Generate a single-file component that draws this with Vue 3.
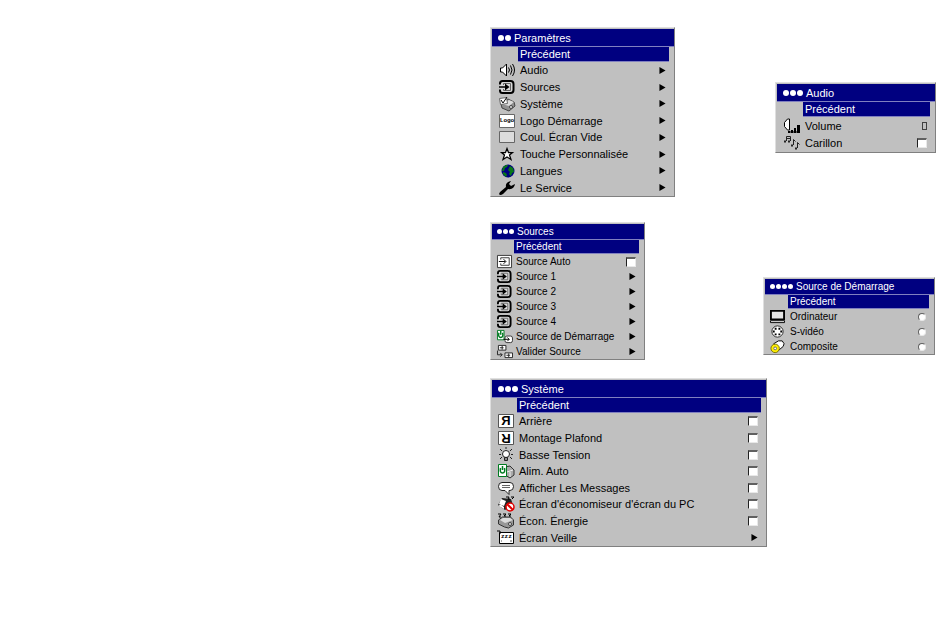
<script setup>
import { reactive } from 'vue';

// type: 'menu' (sous-menu), 'check', 'radio' ou 'level'
const menus = reactive([
  {
    id: 'parametres',
    title: 'Paramètres',
    depth: 2,
    items: [
      { label: 'Audio', icon: 'audio', type: 'menu' },
      { label: 'Sources', icon: 'source', type: 'menu' },
      { label: 'Système', icon: 'system', type: 'menu' },
      { label: 'Logo Démarrage', icon: 'logo', type: 'menu' },
      { label: 'Coul. Écran Vide', icon: 'blank', type: 'menu' },
      { label: 'Touche Personnalisée', icon: 'star', type: 'menu' },
      { label: 'Langues', icon: 'globe', type: 'menu' },
      { label: 'Le Service', icon: 'wrench', type: 'menu' }
    ]
  },
  {
    id: 'audio',
    title: 'Audio',
    depth: 3,
    items: [
      { label: 'Volume', icon: 'volume', type: 'level' },
      { label: 'Carillon', icon: 'chime', type: 'check', value: false }
    ]
  },
  {
    id: 'sources',
    title: 'Sources',
    depth: 3,
    items: [
      { label: 'Source Auto', icon: 'autosource', type: 'check', value: false },
      { label: 'Source 1', icon: 'source', type: 'menu' },
      { label: 'Source 2', icon: 'source', type: 'menu' },
      { label: 'Source 3', icon: 'source', type: 'menu' },
      { label: 'Source 4', icon: 'source', type: 'menu' },
      { label: 'Source de Démarrage', icon: 'startsource', type: 'menu' },
      { label: 'Valider Source', icon: 'enable', type: 'menu' }
    ]
  },
  {
    id: 'demarrage',
    title: 'Source de Démarrage',
    depth: 4,
    items: [
      { label: 'Ordinateur', icon: 'computer', type: 'radio' },
      { label: 'S-vidéo', icon: 'svideo', type: 'radio' },
      { label: 'Composite', icon: 'composite', type: 'radio' }
    ]
  },
  {
    id: 'systeme',
    title: 'Système',
    depth: 3,
    items: [
      { label: 'Arrière', icon: 'rear', type: 'check', value: false },
      { label: 'Montage Plafond', icon: 'ceiling', type: 'check', value: false },
      { label: 'Basse Tension', icon: 'bulb', type: 'check', value: false },
      { label: 'Alim. Auto', icon: 'power', type: 'check', value: false },
      { label: 'Afficher Les Messages', icon: 'message', type: 'check', value: false },
      { label: "Écran d'économiseur d'écran du PC", icon: 'saver', type: 'check', value: false },
      { label: 'Écon. Énergie', icon: 'energy', type: 'check', value: false },
      { label: 'Écran Veille', icon: 'sleep', type: 'menu' }
    ]
  }
]);

// regroupement des menus par ligne
const rows = [
  [menus[0], menus[1]],
  [menus[2], menus[3]],
  [menus[4]]
];
</script>

<template>
  <main class="page">
    <div v-for="(row, index) in rows" :key="index" class="menu-row">
      <section v-for="menu in row" :key="menu.id" class="menu" :class="menu.id">
        <h2 class="menu-title">
          <span class="dots"><i v-for="n in menu.depth" :key="n" class="dot"></i></span>
          {{ menu.title }}
        </h2>
        <div class="items">
          <button type="button" class="item back">
            <span class="label">Précédent</span>
          </button>
          <component
            :is="item.type === 'menu' ? 'button' : 'label'"
            v-for="item in menu.items"
            :key="item.label"
            :type="item.type === 'menu' ? 'button' : null"
            class="item"
          >
            <svg class="icon" viewBox="0 0 18 16" aria-hidden="true">
              <g v-if="item.icon === 'audio'" fill="none" stroke="#000">
                <path d="M2.500 6v4h2l4 4V2l-4 4z" fill="#fff" />
                <path d="M10.500 5.500q2 2.500 0 5M12.500 3.500q3 4.500 0 9M14.500 2q4 6 0 12" />
              </g>
              <g v-else-if="item.icon === 'source'">
                <path d="M2 5.500V4.500Q2 2 4.500 2h8Q15.500 2 15.500 5v6q0 3-3 3h-8Q2 14 2 11.500v-1" fill="#d8d8d8" stroke="#000" stroke-width="2" />
                <path d="M5.500 6V4.500h7v7h-7V10" fill="none" stroke="#666" />
                <path d="M1 7.250h6V4.500L11.500 8 7 11.500V8.750H1z" fill="#000" />
              </g>
              <g v-else-if="item.icon === 'system'">
                <path d="M3 8l7-5 6 3 1 4-6 5-7-3z" fill="#909090" stroke="#444" />
                <path d="M4 8l7 2 5-4-5-2z" fill="#dcdcdc" />
                <circle cx="13" cy="11" r="1.500" fill="#eee" stroke="#444" />
                <path d="M1.500 2.500l7-1 1 6-7 1z" fill="#fff" stroke="#666" />
                <path d="M3 4l2 3 4-6" fill="none" stroke="#000" />
              </g>
              <g v-else-if="item.icon === 'logo'">
                <path d="M1.500 1.500h15v13h-15z" fill="#fff" stroke="#666" />
                <text x="9" y="9" text-anchor="middle" class="tiny">Logo</text>
              </g>
              <path v-else-if="item.icon === 'blank'" d="M1.500 2.500h15v11h-15z" fill="#dcdcdc" stroke="#666" />
              <path v-else-if="item.icon === 'star'" d="M9 2.500l1.500 4h4l-3 2.500 1.500 4.500-4-2.500-4 2.500 1.500-4.500-3-2.500h4z" fill="#fff" stroke="#000" stroke-width="1.250" />
              <g v-else-if="item.icon === 'globe'">
                <circle cx="10" cy="8" r="6.500" fill="#000080" />
                <path d="M5 4l3-2h2L9 4 7 5 6 8 4 8zM12 3l3 2 1 4-2 1-1 3-2-2 1-2-2-2zM5 9l3 1 1 2-1 2-3-3z" fill="#087818" />
              </g>
              <path v-else-if="item.icon === 'wrench'" d="M2 12l6-5Q7 2 13 1l-2 3 2 2 4-2q-1 6-7 5l-5 5q-3 2-4 0z" fill="#000" />
              <g v-else-if="item.icon === 'volume'">
                <path d="M1.500 4.500l3-3.500h2v11h-2l-3-3.500z" fill="#fff" stroke="#000" />
                <path d="M5 13h2v2H5zM8 12h2v3H8zM11 10h2v5h-2zM14 7h3v8h-3z" fill="#000" />
                <path d="M7 14h8" stroke="#000" />
              </g>
              <g v-else-if="item.icon === 'chime'" fill="none" stroke="#222">
                <path d="M3.500 6V1.500h4V6M3.500 3.500h4M10.500 10V4.500l2 2M14.500 13V7.500l2 2" />
                <path d="M1 6.500h2M5 6.500h2M8 10.500h2M12 13.500h2" stroke-width="2" />
              </g>
              <g v-else-if="item.icon === 'autosource'" fill="none" stroke="#333">
                <path d="M1.500 1.500h15v13h-15z" fill="#fff" />
                <path d="M5 6V4h9v8H5v-2" />
                <path d="M3 8h7M8 5.500L10.500 8 8 10.500" stroke="#000" />
              </g>
              <g v-else-if="item.icon === 'startsource'">
                <path d="M1.500 1.500h7v10h-7z" fill="#fff" stroke="#007a20" />
                <path d="M3 4q-1 5 2 5t2-5M5 2v4" fill="none" stroke="#007a20" stroke-width="1.500" />
                <rect x="9.500" y="7.500" width="8" height="7" rx="2" fill="#fff" stroke="#333" />
                <path d="M8 11h6M12 9l2 2-2 2" fill="none" stroke="#000" />
              </g>
              <g v-else-if="item.icon === 'enable'" fill="none" stroke="#222">
                <path d="M2.500 1.500h8v5h-8zM9.500 9.500h8v5h-8z" fill="#fff" />
                <path d="M4 4h4M6.500 2v4M11 12h4M13.500 10v4M1.500 7v4.500h5M4.500 9.500l2 2-2 2" />
              </g>
              <g v-else-if="item.icon === 'computer'">
                <path d="M2 2h14v9H2z" fill="#e4e4e4" stroke="#000" stroke-width="2" />
                <path d="M1.500 12.500h15v2h-15z" fill="#fff" stroke="#000" />
              </g>
              <g v-else-if="item.icon === 'svideo'">
                <circle cx="9" cy="8" r="6" fill="#fff" stroke="#222" />
                <path d="M6 4h2v2H6zM10 4h2v2h-2zM4 7h2v2H4zM12 7h2v2h-2zM6 10h2v2H6zM10 10h2v2h-2z" fill="#000" />
              </g>
              <g v-else-if="item.icon === 'composite'" stroke="#000">
                <path d="M5 5l5-3h4l2 3-1 3-6 5z" fill="#fff" />
                <circle cx="6.500" cy="10" r="4.500" fill="#ffef00" stroke="#766f00" />
                <circle cx="6.500" cy="10" r="1.500" fill="#fff" stroke="#666" />
              </g>
              <g v-else-if="item.icon === 'rear'">
                <path d="M1.500 1.500h15v13h-15z" fill="#fff" stroke="#555" />
                <text x="9" y="12" text-anchor="middle" class="letter">Я</text>
              </g>
              <g v-else-if="item.icon === 'ceiling'">
                <path d="M1.500 1.500h15v13h-15z" fill="#fff" stroke="#555" />
                <text x="9" y="12" text-anchor="middle" class="letter" transform="rotate(180 9 8)">R</text>
              </g>
              <g v-else-if="item.icon === 'bulb'" stroke="#222">
                <circle cx="9" cy="7" r="3.500" fill="#fff" />
                <path d="M7.500 10.500h3v3h-3z" fill="#888" />
                <path d="M9 0v2M3 2l2 2M15 2l-2 2M2 7.500h2M14 7.500h2M3 12l2-2M15 12l-2-2" />
              </g>
              <g v-else-if="item.icon === 'power'">
                <path d="M8 4l5-1 4 4v5l-4 3-5-3z" fill="#aaa" stroke="#333" />
                <path d="M10 9l6-2M13 9v5" stroke="#eee" fill="none" />
                <path d="M1.500 1.500h8v12h-8z" fill="#fff" stroke="#007a20" />
                <path d="M3.500 5q-1 5 2 5t2-5M5.500 3v4" fill="none" stroke="#007a20" stroke-width="1.500" />
              </g>
              <g v-else-if="item.icon === 'message'" stroke="#222" fill="none">
                <path d="M5 2.500h8q3.500 0 3.500 4t-3.500 4h-1v4l-4-4H5Q1.500 10.500 1.500 6.500T5 2.500z" fill="#fff" />
                <path d="M5 5.500h8M5 7.500h8" stroke="#666" />
              </g>
              <g v-else-if="item.icon === 'saver'">
                <path d="M5 2l9 1 2 6-8 5-7-5z" fill="#222" />
                <path d="M4 3l5 2-2 5-5-2zM2 10l5 3v-2l-4-3z" fill="#fff" />
                <path d="M9 1h3l-1 2h2M14 1h3l-2 2" fill="none" stroke="#000" />
                <circle cx="13" cy="11" r="4" fill="#fff" stroke="#e00000" stroke-width="1.500" />
                <path d="M10 8l6 6" stroke="#e00000" stroke-width="2" />
              </g>
              <g v-else-if="item.icon === 'energy'">
                <path d="M1.500 7l4-3h8l3 3v5l-5 3-4-1-6-3z" fill="#989898" stroke="#333" />
                <path d="M3 7l5 3 8-3-3-2H6z" fill="#dcdcdc" />
                <circle cx="13" cy="11" r="1.500" fill="#eee" stroke="#444" />
                <path d="M1 1h3L2 4h2M6 1h3L7 3h2M11 1h3l-2 2h2" fill="none" stroke="#000" />
              </g>
              <g v-else-if="item.icon === 'sleep'">
                <path d="M2.500 2.500h14v11h-14z" fill="#fff" stroke="#000" />
                <path d="M0 1h3v3" fill="none" stroke="#000" />
                <text x="4" y="8" class="tiny">zzz</text>
                <path d="M13 11h2M4 11h1" stroke="#555" />
              </g>
            </svg>
            <span class="label">{{ item.label }}</span>
            <svg v-if="item.type === 'menu'" class="arrow" viewBox="0 0 7 8" aria-hidden="true">
              <path d="M0 0L7 4 0 8z" />
            </svg>
            <input v-else-if="item.type === 'check'" v-model="item.value" type="checkbox" class="check" />
            <input v-else-if="item.type === 'radio'" type="radio" :name="menu.id" class="radio" />
            <input v-else type="range" class="level" min="0" max="10" value="0" />
          </component>
        </div>
      </section>
    </div>
  </main>
</template>

<style>
body {
  margin: 0;
  background: #fff;
}
</style>

<style scoped>
.page {
  display: flex;
  flex-direction: column;
  align-items: flex-end;
  padding: 27px 14px 24px;
  font-family: "Liberation Sans", Arial, sans-serif;
  font-size: 11px;
  color: #000;
}

.menu-row {
  display: flex;
  justify-content: space-between;
  align-items: flex-start;
  width: 100%;
  max-width: 446px;
}

.menu-row + .menu-row {
  margin-top: 25px;
}

.menu-row:last-child {
  margin-top: 18px;
}

.menu {
  --icon-col: 26px;
  box-sizing: border-box;
  display: flex;
  flex-direction: column;
  background: #c0c0c0;
  border: 1px solid #808080;
  border-top-color: #dfdfdf;
  border-left-color: #dfdfdf;
  padding: 1px 0 0 1px;
}

.parametres {
  width: 185px;
  min-height: 170px;
}

.audio {
  width: 161px;
  min-height: 71px;
  margin-top: 55px;
}

.sources {
  --icon-col: 22px;
  width: 155px;
  font-size: 10px;
}

.demarrage {
  --icon-col: 23px;
  width: 172px;
  margin-top: 55px;
  margin-right: 1px;
  font-size: 10px;
}

.systeme {
  --icon-col: 25px;
  width: 277px;
  min-height: 169px;
}

.menu-title {
  display: flex;
  align-items: center;
  gap: 3px;
  margin: 0;
  padding-left: 6px;
  height: 17px;
  font-size: inherit;
  font-weight: normal;
  color: #fff;
  background: #000080;
  border-bottom: 1px solid #8080c0;
}

.dots {
  display: flex;
  gap: 1px;
}

.dot {
  width: 6px;
  height: 6px;
  border-radius: 50%;
  background: #fff;
}

.sources .menu-title,
.demarrage .menu-title {
  height: 15px;
  padding-left: 5px;
}

.sources .dot,
.demarrage .dot {
  width: 5px;
  height: 5px;
}

.items {
  flex: 1;
  display: flex;
  flex-direction: column;
}

.item {
  flex: 1 0 auto;
  display: grid;
  grid-template-columns: var(--icon-col) 1fr auto;
  align-items: center;
  min-height: 16px;
  padding: 0 8px 0 0;
  border: 0;
  background: none;
  font: inherit;
  color: inherit;
  text-align: left;
}

.sources .item,
.demarrage .item {
  min-height: 15px;
}

.menu .back {
  flex: none;
  height: 15px;
  min-height: 0;
  padding-right: 5px;
}

.sources .back,
.demarrage .back {
  height: 14px;
}

.label {
  padding-left: 2px;
  white-space: nowrap;
}

.back .label {
  grid-column: 2 / 4;
  align-self: stretch;
  display: flex;
  align-items: center;
  color: #fff;
  background: #000080;
  border-bottom: 1px solid #8080c0;
}

.icon {
  width: 18px;
  height: 16px;
  justify-self: center;
}

.parametres .icon,
.audio .icon {
  margin-left: 4px;
}

.systeme .icon {
  margin-left: 2px;
}

.sources .icon,
.demarrage .icon {
  width: 17px;
  height: 15px;
  margin-left: 2px;
}

.tiny {
  font-family: "Liberation Mono", monospace;
  font-size: 6px;
  font-weight: bold;
}

.letter {
  font-size: 13px;
  font-weight: bold;
}

.arrow {
  width: 7px;
  height: 7px;
}

.check,
.radio,
.level {
  appearance: none;
  box-sizing: border-box;
  margin: 0;
  background: #fff;
}

.check {
  width: 10px;
  height: 10px;
  border: 1px solid #e8e8e8;
  border-top: 2px solid #606060;
  border-left-color: #202020;
}

.check:checked {
  background: #000080;
}

.radio {
  width: 8px;
  height: 8px;
  border: 1px solid #e8e8e8;
  border-top-color: #606060;
  border-left-color: #606060;
  border-radius: 50%;
}

.radio:checked {
  background: #000;
}

.level {
  width: 5px;
  height: 8px;
  background: none;
  border: 1px solid #404040;
}

.level::-webkit-slider-thumb {
  appearance: none;
  width: 1px;
  height: 1px;
}
</style>
